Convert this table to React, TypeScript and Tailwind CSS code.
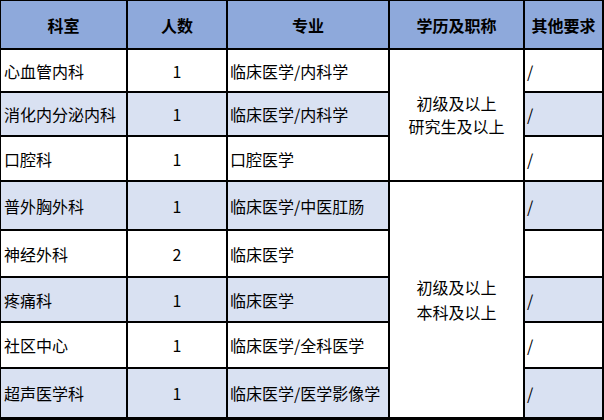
const rows = [
  { dept: "心血管内科", count: "1", major: "临床医学/内科学", other: "/", row: "row-start-2", bg: "bg-white" },
  { dept: "消化内分泌内科", count: "1", major: "临床医学/内科学", other: "/", row: "row-start-3", bg: "bg-[#d9e1f2]" },
  { dept: "口腔科", count: "1", major: "口腔医学", other: "/", row: "row-start-4", bg: "bg-white" },
  { dept: "普外胸外科", count: "1", major: "临床医学/中医肛肠", other: "/", row: "row-start-5", bg: "bg-[#d9e1f2]" },
  { dept: "神经外科", count: "2", major: "临床医学", other: "", row: "row-start-6", bg: "bg-white" },
  { dept: "疼痛科", count: "1", major: "临床医学", other: "/", row: "row-start-7", bg: "bg-[#d9e1f2]" },
  { dept: "社区中心", count: "1", major: "临床医学/全科医学", other: "/", row: "row-start-8", bg: "bg-white" },
  { dept: "超声医学科", count: "1", major: "临床医学/医学影像学", other: "/", row: "row-start-9", bg: "bg-[#d9e1f2]" },
]

const headers = ["科室", "人数", "专业", "学历及职称", "其他要求"]

export default function App() {
  return (
    <div className="grid h-[420px] w-[604px] grid-cols-[125px_98px_160px_133px_77px] grid-rows-[47px_41px_42px_43px_47px_45px_43px_44px_48px] gap-[2px] bg-black pt-[1px] pr-[2px] pb-[3px] pl-[1px] font-['Noto_Sans_CJK_SC','Noto_Sans',sans-serif] text-[16px] text-black">
      {headers.map((h) => (
        <div key={h} className="row-start-1 flex items-center justify-center bg-[#8ea9db] font-bold">
          {h}
        </div>
      ))}

      {rows.map((r) => [
        <div key={r.dept + "-d"} className={`col-start-1 ${r.row} flex items-center pl-[3px] ${r.bg}`}>
          {r.dept}
        </div>,
        <div key={r.dept + "-c"} className={`col-start-2 ${r.row} flex items-center justify-center ${r.bg}`}>
          {r.count}
        </div>,
        <div key={r.dept + "-m"} className={`col-start-3 ${r.row} flex items-center pl-[2px] ${r.bg}`}>
          {r.major}
        </div>,
        <div key={r.dept + "-o"} className={`col-start-5 ${r.row} flex items-center pl-[2px] ${r.bg}`}>
          {r.other}
        </div>,
      ])}

      {/* merged 学历及职称 cells */}
      <div className="col-start-4 row-start-2 row-end-5 flex flex-col items-center justify-center bg-white leading-[23px]">
        <span>初级及以上</span>
        <span>研究生及以上</span>
      </div>
      <div className="col-start-4 row-start-5 row-end-10 flex flex-col items-center justify-center bg-white leading-[25px]">
        <span>初级及以上</span>
        <span>本科及以上</span>
      </div>
    </div>
  )
}
